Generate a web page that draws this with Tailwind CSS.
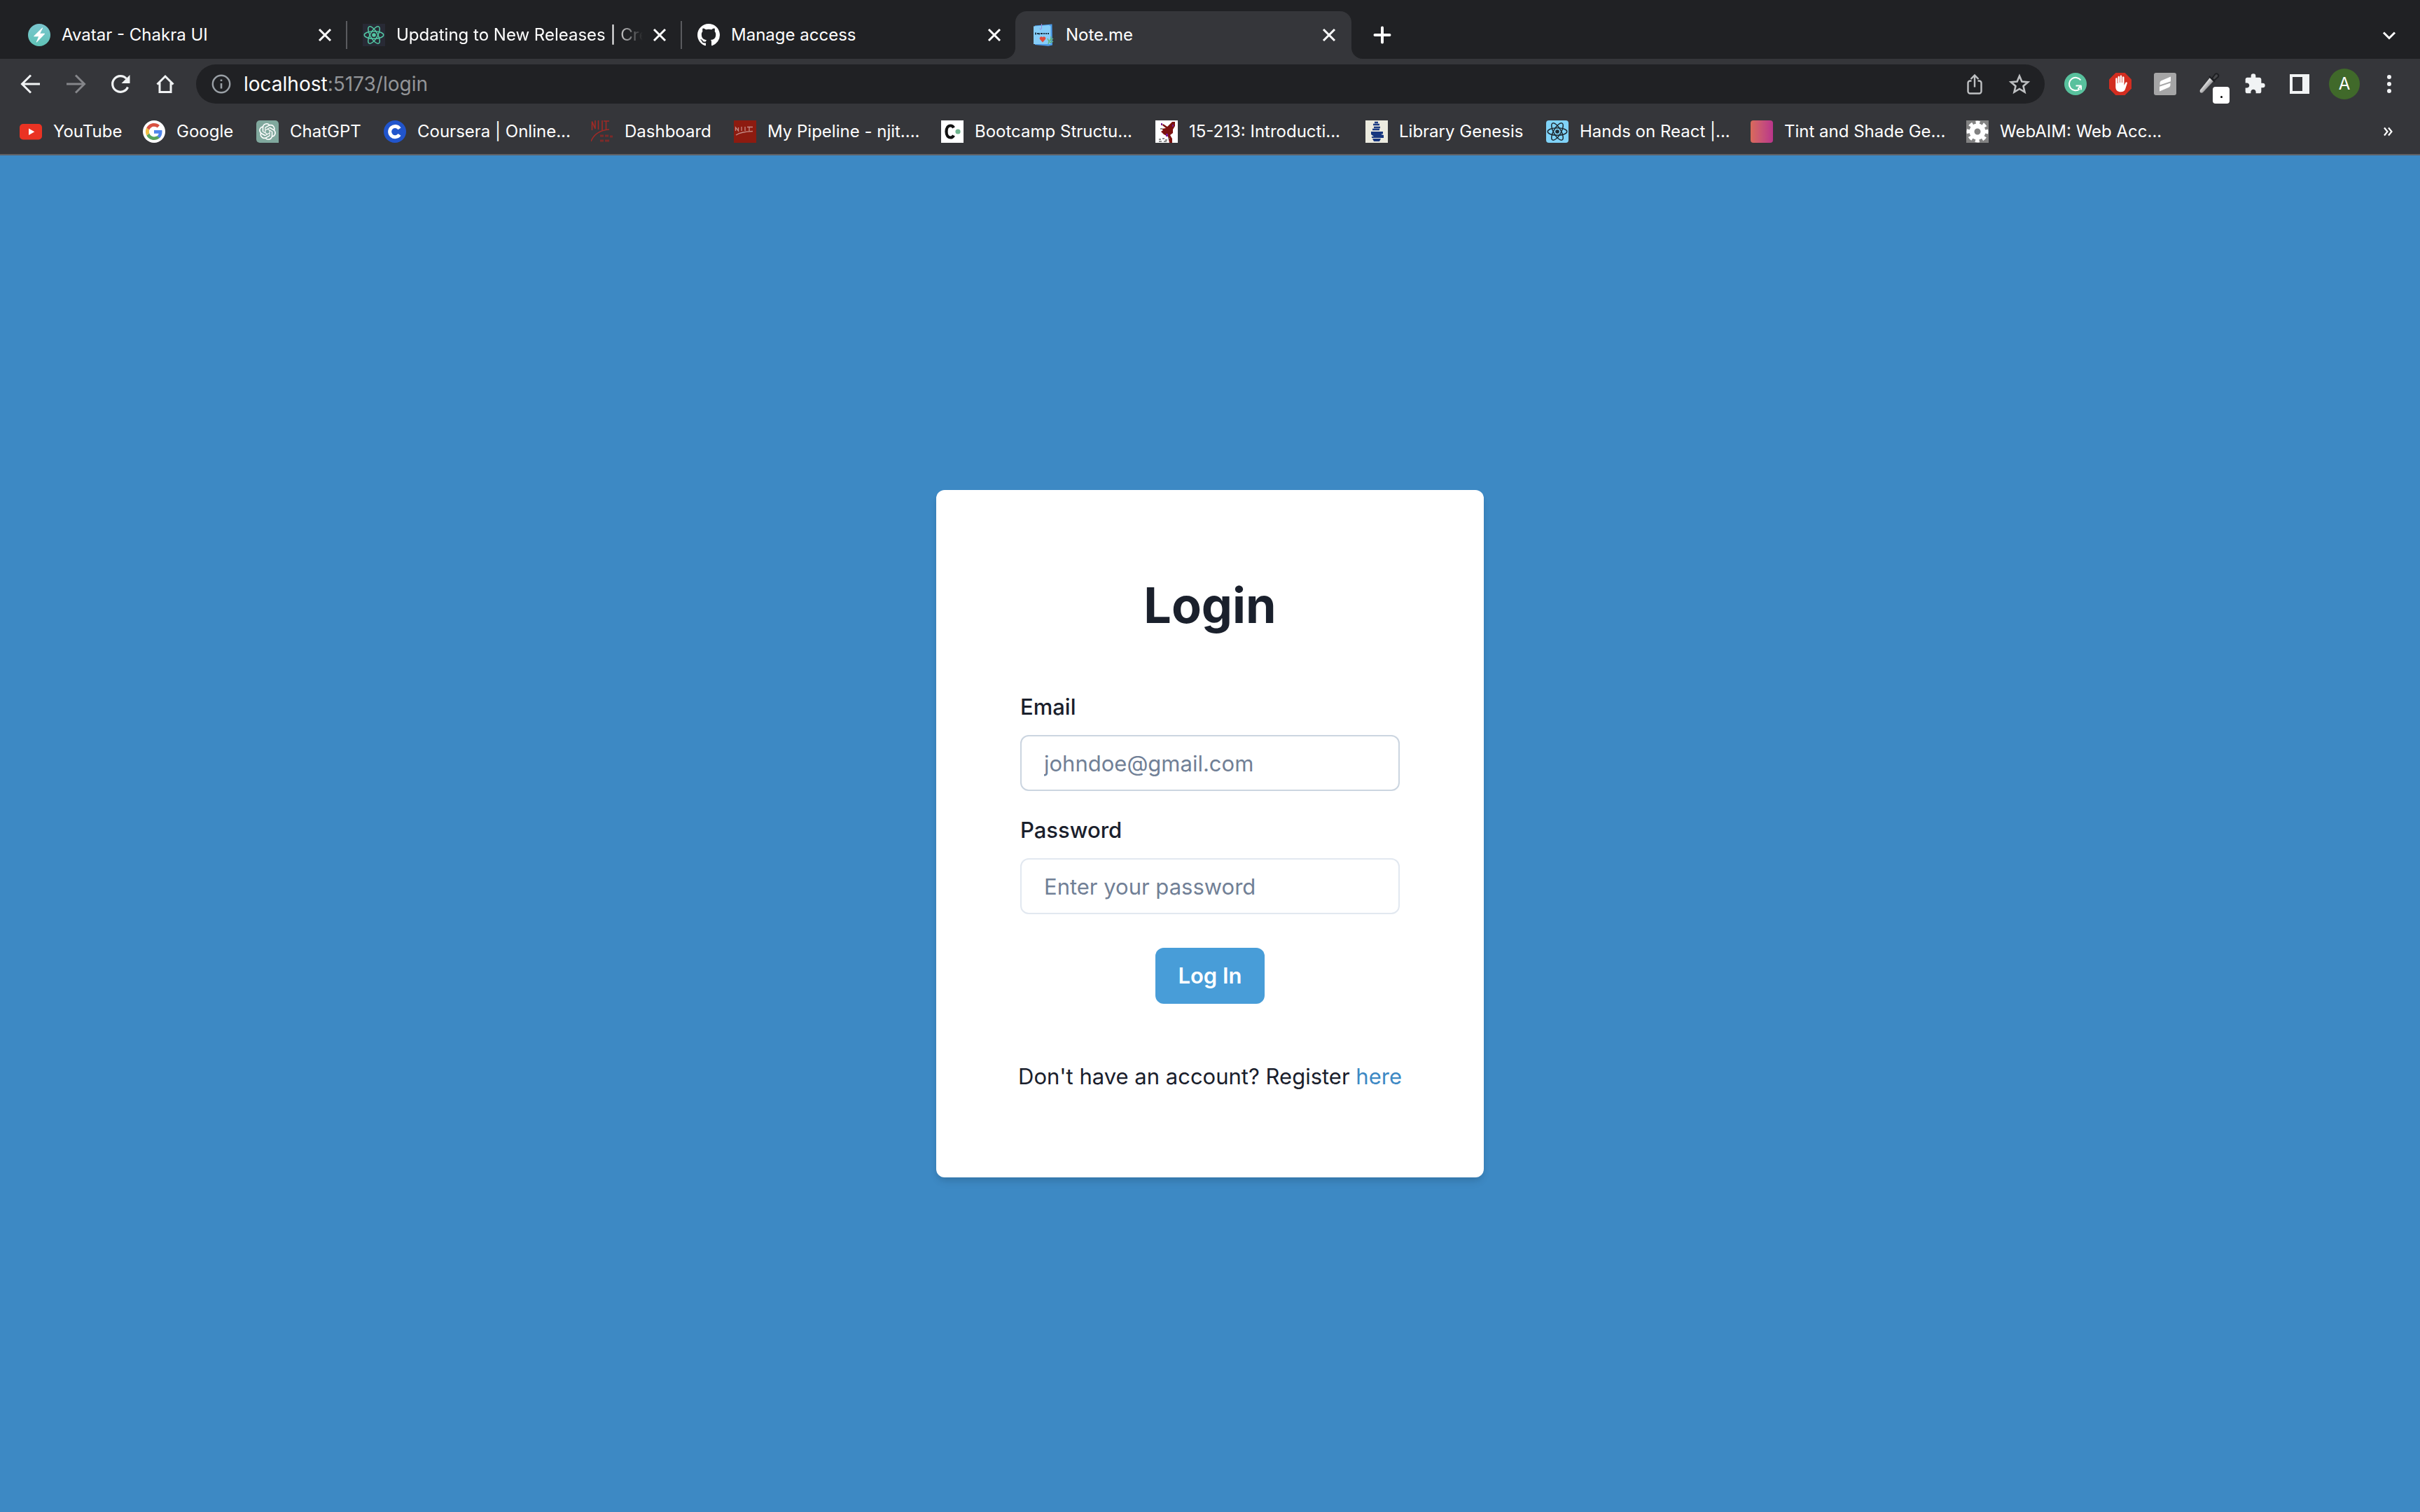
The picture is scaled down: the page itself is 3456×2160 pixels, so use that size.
<!DOCTYPE html>
<html lang="en">
<head>
<meta charset="utf-8">
<title>Note.me</title>
<script src="https://cdn.jsdelivr.net/npm/@tailwindcss/browser@4"></script>
</head>
<body class="flex min-h-screen flex-col bg-[#3d89c4] font-['Inter',sans-serif] text-[#1a202c]">

<svg class="hidden" aria-hidden="true">
  <symbol id="close" viewBox="0 0 24 24"><path d="M4 4l16 16M20 4L4 20" stroke="currentColor" stroke-width="3" fill="none"/></symbol>
  <symbol id="atom" viewBox="0 0 32 32">
    <circle cx="16" cy="16" r="2.8" fill="currentColor"/>
    <g fill="none" stroke="currentColor" stroke-width="1.5">
      <ellipse cx="16" cy="16" rx="13.8" ry="5.2"/>
      <ellipse cx="16" cy="16" rx="13.8" ry="5.2" transform="rotate(60 16 16)"/>
      <ellipse cx="16" cy="16" rx="13.8" ry="5.2" transform="rotate(120 16 16)"/>
    </g>
  </symbol>
</svg>

<header class="border-b-2 border-[#5f6064] bg-[#35363a] text-white">
  <!-- Tab strip -->
  <div class="flex h-[84px] items-end bg-[#202124] pl-4 text-2xl">
    <div class="flex h-[68px] w-[478px] items-center pl-6 pr-[18px]">
      <svg class="size-8 shrink-0" viewBox="0 0 32 32"><defs><linearGradient id="chakra" x1="0" y1="0" x2="0" y2="1"><stop offset="0" stop-color="#7bc6cf"/><stop offset="1" stop-color="#5fc3b6"/></linearGradient></defs><circle cx="16" cy="16" r="16" fill="url(#chakra)"/><path d="M20.500 5.500L8.500 17.300c-.4.400-.2 1 .4 1h6.200l-3.200 7.400c-.3.700.3 1 .8.600l11.100-11.500c.4-.4.200-1-.4-1h-6.100l3.700-7.600c.3-.7-.1-1-.5-.7z" fill="#fff"/></svg>
      <span class="ml-4 flex-1 overflow-hidden whitespace-nowrap">Avatar - Chakra UI</span>
      <button class="size-6" aria-label="Close tab"><svg class="size-6"><use href="#close"/></svg></button>
    </div>
    <div class="flex h-[68px] w-[478px] items-center">
      <div class="flex h-10 w-full items-center border-l-2 border-[#5a5b5f] pl-[22px] pr-[18px]">
        <svg class="size-8 shrink-0 bg-[#282a35] text-[#53c9a5]"><use href="#atom"/></svg>
        <span class="ml-4 mr-8 flex-1 overflow-hidden whitespace-nowrap [mask-image:linear-gradient(to_right,black_88%,transparent)]">Updating to New Releases | Create React App</span>
        <button class="-ml-5 size-6 shrink-0" aria-label="Close tab"><svg class="size-6"><use href="#close"/></svg></button>
      </div>
    </div>
    <div class="flex h-[68px] w-[478px] items-center">
      <div class="flex h-10 w-full items-center border-l-2 border-[#5a5b5f] pl-[22px] pr-[18px]">
        <svg class="size-8 shrink-0" viewBox="0 0 16 16" fill="#fff"><path d="M8 0C3.580 0 0 3.580 0 8c0 3.540 2.290 6.530 5.470 7.590.4.070.55-.17.55-.38 0-.19-.01-.82-.01-1.490-2.010.37-2.530-.49-2.690-.94-.09-.23-.48-.94-.82-1.130-.28-.15-.68-.52-.01-.53.63-.01 1.080.58 1.230.82.72 1.210 1.870.87 2.330.66.070-.52.28-.87.51-1.070-1.780-.2-3.640-.89-3.640-3.950 0-.87.31-1.590.82-2.150-.08-.2-.36-1.020.08-2.120 0 0 .67-.21 2.200.82.64-.18 1.320-.27 2-.27s1.360.09 2 .27c1.530-1.040 2.200-.82 2.200-.82.44 1.100.16 1.920.08 2.120.51.56.82 1.270.82 2.150 0 3.070-1.870 3.750-3.650 3.950.29.25.54.73.54 1.480 0 1.070-.01 1.930-.01 2.200 0 .21.15.46.55.38A8.010 8.010 0 0 0 16 8c0-4.420-3.580-8-8-8z"/></svg>
        <span class="ml-4 flex-1 overflow-hidden whitespace-nowrap">Manage access</span>
        <button class="size-6" aria-label="Close tab"><svg class="size-6"><use href="#close"/></svg></button>
      </div>
    </div>
    <div class="relative flex h-[68px] w-[480px] items-center rounded-t-2xl bg-[#35363a] pl-6 pr-5">
      <svg class="absolute bottom-0 right-full size-4" viewBox="0 0 16 16"><path d="M16 0v16H0A16 16 0 0 0 16 0z" fill="#35363a"/></svg>
      <svg class="absolute bottom-0 left-full size-4" viewBox="0 0 16 16"><path d="M0 0v16h16A16 16 0 0 1 0 0z" fill="#35363a"/></svg>
      <svg class="size-8 shrink-0" viewBox="0 0 32 32"><path d="M4 2.500L28.500.500l.5 30-6 1.200L4 30z" fill="#4a9ae8"/><path d="M2 3.500l22-1.500 2.500 1.500V29L2 29z" fill="#86cdf8"/><path d="M13.500 0v6c0 2.500-2.500 2.500-2.500.5" stroke="#9a86d8" fill="none"/><path d="M5 12.500v3M7 14h2M10 13v2.500M12 14h3M16 14h2M19 14h2M22 14h2" stroke="#1a3345" stroke-width="1.800"/><path d="M15 26.500l-4-4.500a2.300 2.300 0 0 1 4-2.500 2.300 2.300 0 0 1 4 2.500z" fill="#e04a3a"/><path d="M23 29c0-5 5-5 4-11M24 25l-2-4M26 24l4-3M25 27l5-2" stroke="#63b57c" fill="none" stroke-width="1.400"/></svg>
      <span class="ml-4 flex-1">Note.me</span>
      <button class="size-6" aria-label="Close tab"><svg class="size-6"><use href="#close"/></svg></button>
    </div>
    <button class="ml-7 flex h-[68px] items-center" aria-label="New tab"><svg class="size-8" viewBox="0 0 32 32"><path d="M16 5.500v21M5.500 16h21" stroke="#fff" stroke-width="4" stroke-linecap="round"/></svg></button>
    <button class="ml-auto mr-7 flex h-[68px] items-center" aria-label="Search tabs"><svg class="size-8" viewBox="0 0 32 32"><path d="M8 12.500l8 8 8-8" stroke="#fff" stroke-width="3" fill="none"/></svg></button>
  </div>

  <!-- Toolbar -->
  <div class="flex h-[72px] items-center pl-7 pr-7 text-[#f1f3f4]">
    <div class="flex gap-8">
      <button class="size-8" aria-label="Back"><svg viewBox="0 0 32 32"><path d="M29 16H4M16 3.500L3.500 16 16 28.500" fill="none" stroke="currentColor" stroke-width="3"/></svg></button>
      <button class="size-8 text-[#85868a]" aria-label="Forward"><svg viewBox="0 0 32 32"><path d="M3 16h25M16 3.500L28.500 16 16 28.500" fill="none" stroke="currentColor" stroke-width="3"/></svg></button>
      <button class="size-8" aria-label="Reload"><svg viewBox="0 0 32 32"><path d="M26.500 20.500A11.400 11.400 0 1 1 24.500 8.300" fill="none" stroke="currentColor" stroke-width="3.200"/><path d="M29.500 3v12H17.500z" fill="currentColor"/></svg></button>
      <button class="size-8" aria-label="Home"><svg viewBox="0 0 32 32"><path d="M4.500 16.500L16 5l11.500 11.500M8 14v13.500h16V14" fill="none" stroke="currentColor" stroke-width="3"/></svg></button>
    </div>
    <div class="ml-7 flex h-14 flex-1 items-center rounded-full bg-[#202124] pl-5 pr-5">
      <svg class="size-8" viewBox="0 0 32 32"><circle cx="16" cy="16" r="12.200" fill="none" stroke="#9aa0a6" stroke-width="2.400"/><path d="M16 15v7.500M16 9.500v2.600" stroke="#9aa0a6" stroke-width="2.600"/></svg>
      <div class="relative ml-4 flex-1">
        <input aria-label="Address" value="localhost:5173/login" class="block w-full bg-transparent text-[28px] leading-9 text-transparent outline-none">
        <div class="pointer-events-none absolute inset-0 text-[28px] leading-9 text-[#939598]" aria-hidden="true"><span class="text-white">localhost</span>:5173/login</div>
      </div>
      <div class="flex gap-8 text-[#bfc1c3]">
        <button class="size-8" aria-label="Share"><svg viewBox="0 0 32 32"><path d="M11.500 11.500H9.500a3 3 0 0 0-3 3v12a3 3 0 0 0 3 3h13a3 3 0 0 0 3-3v-12a3 3 0 0 0-3-3h-2M16 20.500V4M10.500 9L16 3.500 21.500 9" fill="none" stroke="currentColor" stroke-width="2.400"/></svg></button>
        <button class="size-8" aria-label="Bookmark this tab"><svg viewBox="0 0 32 32"><path d="M16 4.500l3.400 8 8.700.8-6.600 5.700 2 8.500L16 23l-7.500 4.500 2-8.500-6.600-5.700 8.700-.8z" fill="none" stroke="currentColor" stroke-width="2.600"/></svg></button>
      </div>
    </div>
    <div class="ml-7 flex items-center gap-8">
      <button class="size-8" aria-label="Grammarly"><svg viewBox="0 0 32 32"><circle cx="16" cy="16" r="16" fill="#58c19d"/><path d="M23.500 10.500a9.200 9.200 0 1 0-1.500 12.700M16.500 18.500h8M24 18.500v5.800M24 18.500l-4.500 4.500" fill="none" stroke="#fff" stroke-width="2"/></svg></button>
      <button class="size-8" aria-label="AdBlock"><svg viewBox="0 0 32 32"><path d="M9.400 0h13.200L32 9.400v13.200L22.600 32H9.400L0 22.600V9.400z" fill="#d32d20"/><path d="M9.300 8.500c0-1.800 2.400-1.800 2.400 0V15h.8V6.200c0-2 2.500-2 2.500 0V14h.7V5c0-2 2.500-2 2.500 0v9h.8V6.800c0-2 2.500-2 2.500 0V18l2-4c.8-1.500 2.800-.8 2.300 1l-2.600 8c-1 3-3 4.200-6.500 4.200-4.500 0-7.400-2.200-7.400-7z" fill="#fff"/></svg></button>
      <button class="size-8" aria-label="Scribe"><svg viewBox="0 0 32 32"><rect width="32" height="32" rx="3" fill="#a5a5a6"/><path d="M24 5.500v6.800L8.500 17.500V15c0-1.800.6-3 2-3.800zM8 26.500v-6.800l15.500-5.200V17c0 1.800-.6 3-2 3.800z" fill="#fff"/></svg></button>
      <button class="relative size-8" aria-label="Color picker"><svg viewBox="0 0 32 32"><defs><linearGradient id="pen" x1="0" y1="0" x2="1" y2="1"><stop offset=".3" stop-color="#fff"/><stop offset=".65" stop-color="#8e8e90"/></linearGradient></defs><path d="M16 7l5 5L6 28c-2 1.500-5.500.5-4-3.500z" fill="url(#pen)"/><path d="M15 5l8 8M19 8l4.500-6c2-2.500 6.500 1 4 4L22 11z" stroke="#1e1f22" stroke-width="2" fill="#47484b"/></svg><span class="absolute left-5 top-5 flex h-6 w-6 items-center justify-center rounded bg-white"><span class="mt-1 size-[3px] rounded-full bg-black"></span></span></button>
      <button class="size-8" aria-label="Extensions"><svg viewBox="0 0 24 24"><path d="M20.500 11H19V7c0-1.100-.9-2-2-2h-4V3.500a2.500 2.500 0 0 0-5 0V5H4c-1.100 0-1.990.9-1.990 2v3.800H3.500c1.490 0 2.700 1.210 2.700 2.700s-1.210 2.700-2.700 2.700H2V20c0 1.100.9 2 2 2h3.800v-1.500c0-1.490 1.210-2.700 2.700-2.700 1.490 0 2.700 1.210 2.700 2.700V22H17c1.100 0 2-.9 2-2v-4h1.500a2.500 2.500 0 0 0 0-5z" fill="currentColor"/></svg></button>
      <button class="size-8" aria-label="Side panel"><svg viewBox="0 0 32 32"><path d="M2 2h28v28H2zM6 6v20h14V6z" fill="currentColor" fill-rule="evenodd"/></svg></button>
      <button class="-mx-1.5 flex size-11 items-center justify-center rounded-full bg-[#40692a] text-2xl text-white" aria-label="Profile">A</button>
      <button class="size-8" aria-label="Menu"><svg viewBox="0 0 32 32" fill="currentColor"><circle cx="16" cy="6" r="3"/><circle cx="16" cy="16" r="3"/><circle cx="16" cy="26" r="3"/></svg></button>
    </div>
  </div>

  <!-- Bookmarks bar -->
  <nav class="flex h-16 items-center pl-7 pr-7 text-2xl" aria-label="Bookmarks">
    <a href="#" class="flex w-[176px] gap-4 whitespace-nowrap"><svg class="size-8" viewBox="0 0 32 32"><rect x="0" y="5" width="32" height="22.500" rx="5" fill="#ea3323"/><path d="M13 11.500l8.300 4.700L13 21z" fill="#fff"/></svg>YouTube</a>
    <a href="#" class="flex w-[162px] gap-4 whitespace-nowrap"><svg class="size-8" viewBox="0 0 32 32"><circle cx="16" cy="16" r="16" fill="#fff"/><g transform="translate(4 4)"><path fill="#4f86ec" d="M23.500 12.300c0-.9-.1-1.500-.2-2.200H12v4.600h6.600c-.1 1.100-.9 2.700-2.500 3.800l3.800 2.900c2.300-2.100 3.600-5.200 3.600-9.100z"/><path fill="#58a55c" d="M12 24c3.200 0 5.900-1.100 7.900-2.900l-3.800-2.900c-1 .7-2.400 1.200-4.100 1.200-3.100 0-5.800-2.100-6.700-4.900l-3.900 3C3.300 21.400 7.300 24 12 24z"/><path fill="#f1bd42" d="M5.300 14.400c-.3-.7-.4-1.500-.4-2.400s.2-1.700.4-2.400L1.300 6.600C.5 8.200 0 10.100 0 12s.5 3.800 1.300 5.400z"/><path fill="#d95140" d="M12 4.700c2.200 0 3.700.9 4.600 1.700L20 3.100C17.900 1.200 15.200 0 12 0 7.300 0 3.300 2.700 1.300 6.600l3.900 3C6.200 6.800 8.900 4.700 12 4.700z"/></g></svg>Google</a>
    <a href="#" class="flex w-[182px] gap-4 whitespace-nowrap"><svg class="size-8" viewBox="0 0 32 32"><path d="M5 0h22a5 5 0 0 1 5 5v27H5a5 5 0 0 1-5-5V5a5 5 0 0 1 5-5z" fill="#80a89d"/><path transform="translate(4 4)" fill="#fff" d="M22.282 9.821a5.985 5.985 0 0 0-.516-4.910 6.046 6.046 0 0 0-6.510-2.900A6.065 6.065 0 0 0 4.981 4.182a5.985 5.985 0 0 0-3.998 2.900 6.046 6.046 0 0 0 .743 7.097 5.980 5.980 0 0 0 .511 4.911 6.051 6.051 0 0 0 6.515 2.900A5.985 5.985 0 0 0 13.260 24a6.056 6.056 0 0 0 5.772-4.206 5.990 5.990 0 0 0 3.998-2.900 6.056 6.056 0 0 0-.747-7.073zM13.260 22.430a4.476 4.476 0 0 1-2.876-1.040l.141-.081 4.779-2.758a.795.795 0 0 0 .393-.681v-6.737l2.020 1.168a.071.071 0 0 1 .038.052v5.583a4.504 4.504 0 0 1-4.495 4.494zM3.600 18.304a4.471 4.471 0 0 1-.535-3.014l.142.085 4.783 2.759a.771.771 0 0 0 .780 0l5.843-3.369v2.332a.080.080 0 0 1-.033.062L9.740 19.950a4.500 4.500 0 0 1-6.140-1.646zM2.341 7.896a4.485 4.485 0 0 1 2.365-1.973V11.600a.766.766 0 0 0 .388.677l5.815 3.355-2.020 1.168a.076.076 0 0 1-.072 0l-4.830-2.787A4.504 4.504 0 0 1 2.341 7.872zm16.597 3.856l-5.834-3.387 2.016-1.164a.076.076 0 0 1 .071 0l4.830 2.791a4.494 4.494 0 0 1-.676 8.105v-5.678a.790.790 0 0 0-.407-.667zm2.010-3.024l-.142-.085-4.774-2.782a.776.776 0 0 0-.785 0L9.409 9.230V6.897a.066.066 0 0 1 .028-.061l4.830-2.787a4.500 4.500 0 0 1 6.680 4.660zM8.306 12.863l-2.020-1.164a.080.080 0 0 1-.038-.057V6.074a4.500 4.500 0 0 1 7.376-3.453l-.142.080-4.778 2.758a.795.795 0 0 0-.393.682zm1.098-2.365l2.602-1.500 2.607 1.500v2.999l-2.597 1.500-2.607-1.500z"/></svg>ChatGPT</a>
    <a href="#" class="flex w-[296px] gap-4 whitespace-nowrap"><svg class="size-8" viewBox="0 0 32 32"><circle cx="16" cy="16" r="16" fill="#2155cc"/><path d="M22.500 11.800a7.600 7.600 0 1 0 0 8.600" fill="none" stroke="#fff" stroke-width="5"/></svg>Coursera | Online...</a>
    <a href="#" class="flex w-[204px] gap-4 whitespace-nowrap"><svg class="size-8" viewBox="0 0 32 32"><g fill="none" stroke="#a02a26" stroke-width="1.600"><path d="M1.500 14V1.500L6 12V0M10.500 0v13M16 0v14M21.500 1v13M18 1h8"/><path d="M0 30C4 20 12 14 26 13"/><path d="M13 22h5M20 22h5M27 23h4M13 29h5M20 29h6" stroke="#7c2a29" stroke-width="3"/></g></svg>Dashboard</a>
    <a href="#" class="flex w-[296px] gap-4 whitespace-nowrap"><svg class="size-8" viewBox="0 0 32 32"><path fill="#8d1b10" d="M0 0h32v32H0z"/><g stroke="#c58a85" fill="none" stroke-width="1.300"><path d="M2.500 15v-5l4 5v-5M11 9v6M16 9v6M22 9v6M19 9.500h8"/><path d="M3 21c4-3 12-5 24-5.500"/></g></svg>My Pipeline - njit....</a>
    <a href="#" class="flex w-[306px] gap-4 whitespace-nowrap"><svg class="size-8" viewBox="0 0 32 32"><path fill="#fff" d="M0 0h32v32H0z"/><path d="M18 10.500c-1-2-2.500-3-4.500-3-3.500 0-6 3-6 8.500s2.500 8.500 6 8.500c2 0 3.500-1 4.500-3" fill="none" stroke="#111" stroke-width="4.200"/><circle cx="24" cy="16" r="3.600" fill="#6fb58e"/></svg>Bootcamp Structu...</a>
    <a href="#" class="flex w-[300px] gap-4 whitespace-nowrap"><svg class="size-8" viewBox="0 0 32 32"><path fill="#fff" d="M0 0h32v32H0z"/><path d="M24 2h4v6l-3 5v5l-4 3 3 5v6h-4l-2-9-6-3-4-4 3-2-2-2 6-1-5-4 1-2 6 4z" fill="#7c1210"/><path d="M8 4h2v3H8zM15 19h3v4h-3zM24 6h2v3h-2z" fill="#7a1a90"/><path d="M5 27h3M10 26h3M14 28h3M18 26h2M5 30h4M12 30h4M7 12h3" stroke="#8a8a8a" stroke-width="2"/></svg>15-213: Introducti...</a>
    <a href="#" class="flex w-[258px] gap-4 whitespace-nowrap"><svg class="size-8" viewBox="0 0 32 32"><path fill="#ecebdf" d="M0 0h32v32H0z"/><path d="M13 3h5M11 6h9M12 10h9M10 13h10" stroke="#1e3d84" stroke-width="2.400"/><path d="M8 16h17v3l-3 1 4 1v4H9v-2h3l-4-3zM10 26h12l-2 4h-8z" fill="#17377f"/></svg>Library Genesis</a>
    <a href="#" class="flex w-[292px] gap-4 whitespace-nowrap"><svg class="size-8 rounded bg-[#80d3f8] text-[#1f2b33]"><use href="#atom"/></svg>Hands on React |...</a>
    <a href="#" class="flex w-[308px] gap-4 whitespace-nowrap"><span class="size-8 rounded bg-linear-to-r from-[#d96a5a] to-[#b9348b]"></span>Tint and Shade Ge...</a>
    <a href="#" class="flex gap-4 whitespace-nowrap"><svg class="size-8" viewBox="0 0 32 32"><path fill="#828282" d="M0 0h32v32H0z"/><circle cx="16" cy="16" r="8" fill="none" stroke="#fff" stroke-width="7"/><circle cx="16" cy="16" r="13" fill="none" stroke="#fff" stroke-width="5" stroke-dasharray="5.600 4.610" transform="rotate(-12 16 16)"/></svg>WebAIM: Web Acc...</a>
    <button class="ml-auto size-8" aria-label="More bookmarks"><svg viewBox="0 0 32 32"><path d="M9 10.500l4.500 5.500L9 21.500M15 10.500l4.500 5.500-4.500 5.500" fill="none" stroke="#fff" stroke-width="2.200"/></svg></button>
  </nav>
</header>

<main class="flex flex-1 items-center justify-center">
  <section class="w-full max-w-[782px] rounded-xl bg-white p-[120px] shadow-[0_8px_12px_-2px_rgba(0,0,0,0.1),0_4px_8px_-2px_rgba(0,0,0,0.06)]">
    <h1 class="text-center text-[70px] font-bold leading-[90px]">Login</h1>
    <form class="mt-[76px] flex flex-col text-[31px] leading-[48px]">
      <label for="email" class="font-medium">Email</label>
      <input id="email" type="email" placeholder="johndoe@gmail.com" class="mt-4 h-20 w-full rounded-xl border-2 border-[#cbd5e0] px-8 placeholder:text-[#718096]">
      <label for="password" class="mt-8 font-medium">Password</label>
      <input id="password" type="password" placeholder="Enter your password" class="mt-4 h-20 w-full rounded-xl border-2 border-[#e2e8f0] px-8 placeholder:text-[#718096]">
      <button type="submit" class="mt-12 h-20 self-center rounded-xl bg-[#489dd8] px-8 font-semibold text-white">Log In</button>
    </form>
    <p class="-mx-2 mt-20 whitespace-nowrap text-center text-[31px] leading-[48px]">Don't have an account? Register <a href="#" class="text-[#3d89c4]">here</a></p>
  </section>
</main>
</body>
</html>
